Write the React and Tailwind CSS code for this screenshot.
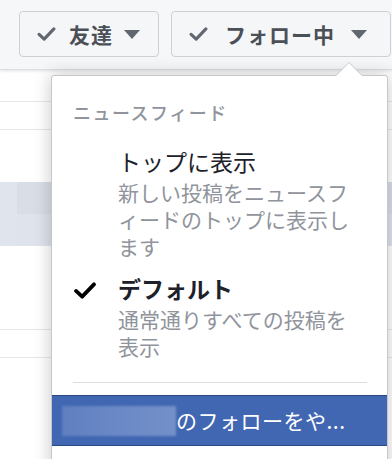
import React from 'react';

const CheckIcon = ({ className, strokeWidth = 3 }) => (
  <svg viewBox="0 0 24 18" className={className} fill="none">
    <path d="M2.5 9.5 L9 15.5 L21.5 2.5" stroke="currentColor" strokeWidth={strokeWidth} strokeLinecap="round" strokeLinejoin="round" />
  </svg>
);

const Caret = ({ className }) => (
  <svg viewBox="0 0 16 9" className={className}>
    <path d="M0 0 H16 L8 9 Z" fill="currentColor" />
  </svg>
);

const ToggleButton = ({ label, width, textClass }) => (
  <div
    className={`flex items-center h-[46px] ${width} rounded-[4px] border border-[#ced0d4] bg-[#f5f6f7] text-[#4b4f56] shrink-0`}
  >
    <CheckIcon className="w-[19px] h-[14px] ml-[17px] text-[#606770]" strokeWidth={4} />
    <span className={`text-[21px] font-bold leading-none ${textClass}`}>{label}</span>
    <Caret className="w-[16px] h-[9px] text-[#606770]" />
  </div>
);

const MenuOption = ({ title, desc, checked }) => (
  <div className="flex">
    <div className="w-[45px] flex items-start pt-[9px]">
      {checked && <CheckIcon className="w-[24px] h-[17px] text-black" strokeWidth={4} />}
    </div>
    <div>
      <div className={`text-[23px] leading-[30px] text-[#1d2129] ${checked ? 'font-bold' : ''}`}>{title}</div>
      <div className="mt-[3px] text-[21px] leading-[27px] text-[#90949c] w-[245px]">{desc}</div>
    </div>
  </div>
);

export default function App() {
  return (
    <div className="relative w-[392px] h-[459px] overflow-hidden bg-white font-['Noto_Sans_CJK_JP','Noto_Sans',sans-serif]">
      {/* top bar */}
      <div className="h-[70px] bg-[#f6f7f9] border-b border-[#dddfe2] shadow-[0_1px_3px_rgba(0,0,0,0.12)] flex items-start pt-[11px] pl-[19px] gap-[12px]">
        <ToggleButton label="友達" width="w-[140px]" textClass="ml-[13px] mr-[11px] tracking-[1px]" />
        <ToggleButton label="フォロー中" width="w-[220px]" textClass="ml-[17px] mr-[16px] tracking-[1px]" />
      </div>

      {/* background feed, mostly hidden by the menu */}
      <div className="flex flex-col">
        <div className="h-[32px] border-b border-[#e5e7eb]" />
        <div className="h-[28px] border-b border-[#e5e7eb]" />
        <div className="h-[52px]" />
        <div className="h-[64px] flex">
          <div className="w-[17px] bg-[#e0e4ed]" />
          <div className="flex-1 flex flex-col">
            <div className="h-[32px] bg-[#d9dde6]" />
            <div className="h-[32px] bg-[#dfe3ec]" />
          </div>
        </div>
        <div className="h-[84px] border-b border-[#e5e7eb]" />
        <div className="h-[28px] border-b border-[#e5e7eb]" />
      </div>

      {/* dropdown menu */}
      <div className="absolute left-[51px] top-[75px] w-[337px] h-[400px] bg-white border border-[#c4c7cc] rounded-t-[3px] shadow-[0_0_18px_rgba(0,0,0,0.22)]">
        <svg className="absolute -top-[14px] left-[283px] w-[28px] h-[15px]" viewBox="0 0 28 15">
          <path d="M0 14.5 L14 0.5 L28 14.5" fill="white" stroke="#c4c7cc" strokeWidth="1" />
          <rect x="0.5" y="14" width="27" height="2" fill="white" />
        </svg>

        <div className="pt-[23px] pl-[21px] text-[18px] leading-[26px] font-medium text-[#90949c] tracking-[1.5px]">
          ニュースフィード
        </div>

        <div className="pl-[21px] pr-[20px]">
          <div className="mt-[21px]">
            <MenuOption title="トップに表示" desc="新しい投稿をニュースフィードのトップに表示します" />
          </div>
          <div className="mt-[13px]">
            <MenuOption title="デフォルト" desc="通常通りすべての投稿を表示" checked />
          </div>
          <div className="mt-[22px] h-px bg-[#dddfe2]" />
        </div>

        <div className="mt-[12px] h-[51px] bg-[#4267b2] border-y border-[#29487d] flex items-center pl-[10px]">
          <div className="w-[114px] h-[30px] bg-gradient-to-r from-[#5f7fc0] via-[#6b89c6] to-[#7390c9] blur-[1px]" />
          <span className="text-[21px] leading-none text-white tracking-[0.5px]">のフォローをや...</span>
        </div>
      </div>
    </div>
  );
}
